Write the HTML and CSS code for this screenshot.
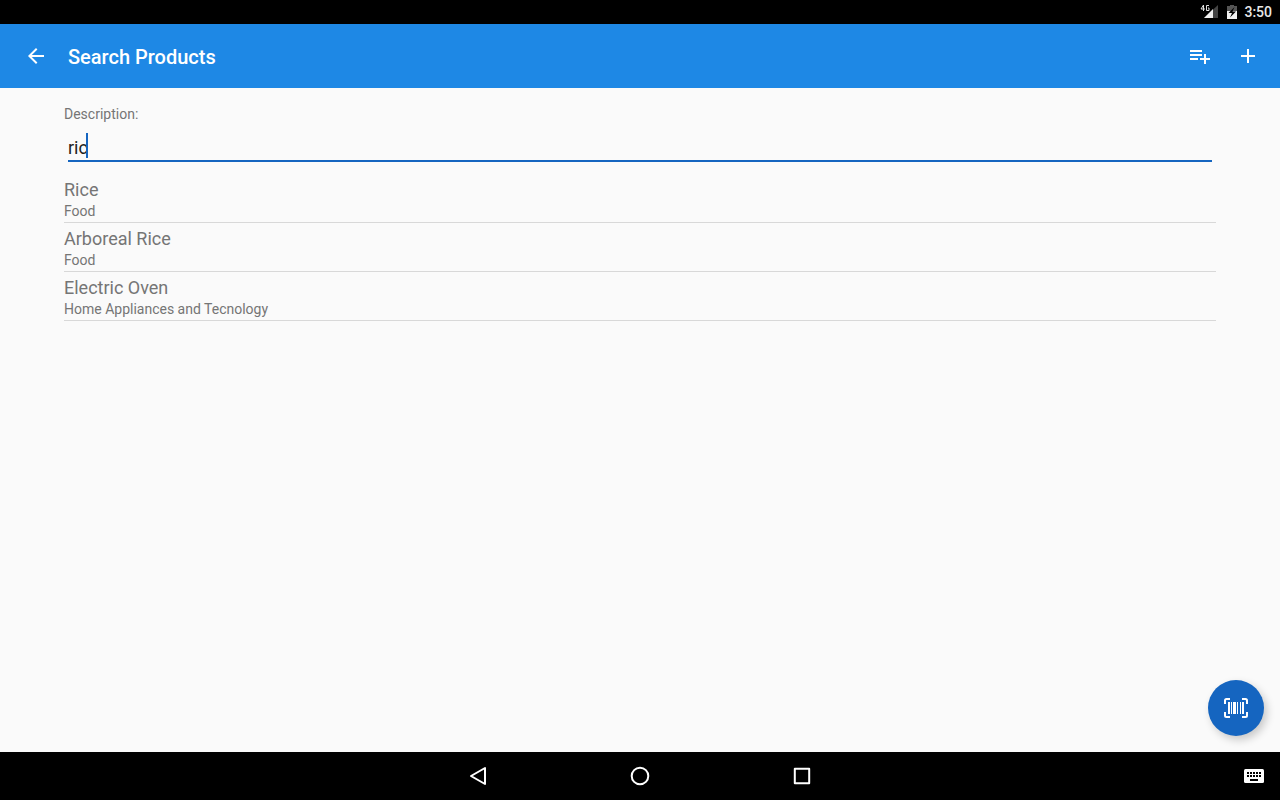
FILE: index.html
```html
<!DOCTYPE html>
<html lang="en">
<head>
<meta charset="utf-8">
<meta name="viewport" content="width=device-width, initial-scale=1">
<title>Search Products</title>
<link rel="stylesheet" href="styles.css">
</head>
<body>
<div class="status-bar">
  <svg class="signal" width="18" height="16" viewBox="0 0 18 16" aria-label="4G signal">
    <path d="M18 1v13H4z" fill="#444"/>
    <path d="M13 5v9H4z" fill="#f0f0f0"/>
    <path d="M3.500 7V1L1 5h4M9 1.500H6.500v5H9V4H8" fill="none" stroke="#e0e0e0"/>
  </svg>
  <svg class="battery" width="10" height="16" viewBox="0 0 10 16" aria-label="Battery charging">
    <path d="M3 1h4v1h3v6H0V2h3z" fill="#555"/>
    <path d="M0 7h10v8H0z" fill="#f0f0f0"/>
    <path d="M7.500 3L1.500 9H5l-2 4.500L9 7.500H5.500z" fill="#000"/>
  </svg>
  <time class="clock">3:50</time>
</div>
<header class="app-bar">
  <button class="icon-button" type="button" aria-label="Back">
    <svg width="24" height="24" viewBox="0 0 24 24" fill="currentColor"><path d="M20 11H7.830l5.590-5.590L12 4l-8 8 8 8 1.410-1.410L7.830 13H20z"/></svg>
  </button>
  <h1 class="title">Search Products</h1>
  <button class="icon-button" type="button" aria-label="Add to list">
    <svg width="24" height="24" viewBox="0 0 24 24" fill="currentColor"><path d="M14 10H2v2h12zM14 6H2v2h12zM18 14v-4h-2v4h-4v2h4v4h2v-4h4v-2zM2 16h8v-2H2z"/></svg>
  </button>
  <button class="icon-button" type="button" aria-label="Add product">
    <svg width="24" height="24" viewBox="0 0 24 24" fill="currentColor"><path d="M19 13h-6v6h-2v-6H5v-2h6V5h2v6h6z"/></svg>
  </button>
</header>
<main class="content">
  <label class="label" for="description">Description:</label>
  <div class="field">
    <input class="input" id="description" type="text" value="ric" autocomplete="off" spellcheck="false">
    <span class="caret"></span>
  </div>
  <ul class="products">
    <li class="product"><span class="name">Rice</span><span class="category">Food</span></li>
    <li class="product"><span class="name">Arboreal Rice</span><span class="category">Food</span></li>
    <li class="product"><span class="name">Electric Oven</span><span class="category">Home Appliances and Tecnology</span></li>
  </ul>
  <button class="fab" type="button" aria-label="Scan barcode">
    <svg width="24" height="20" viewBox="0 0 24 20" fill="#fff">
      <path d="M6 1H2.500Q1 1 1 2.500V6M18 1h3.500Q23 1 23 2.500V6M6 19H2.500Q1 19 1 17.500V14M18 19h3.500q1.500 0 1.500-1.500V14" fill="none" stroke="#fff" stroke-width="2"/>
      <path d="M4 4h2v12H4zM7 4h1v12H7zM9 4h3v12H9zM13 4h1v12h-1zM16 4h1v12h-1zM18 4h2v12h-2z"/>
    </svg>
  </button>
</main>
<nav class="nav-bar">
  <div class="nav-main">
    <button class="nav-button" type="button" aria-label="Back">
      <svg width="24" height="24" viewBox="0 0 24 24"><path d="M19 4v16L5 12z"/></svg>
    </button>
    <button class="nav-button" type="button" aria-label="Home">
      <svg width="24" height="24" viewBox="0 0 24 24"><circle cx="12" cy="12" r="8.300"/></svg>
    </button>
    <button class="nav-button" type="button" aria-label="Recent apps">
      <svg width="24" height="24" viewBox="0 0 24 24"><rect x="4.800" y="4.800" width="14.400" height="14.400"/></svg>
    </button>
  </div>
  <button class="keyboard" type="button" aria-label="Keyboard">
    <svg width="20" height="14" viewBox="0 0 20 14"><rect width="20" height="14" rx="1.500" fill="#fff"/><path d="M3 4h14M3 7h14" stroke="#000" stroke-width="2" stroke-dasharray="2 1"/><path d="M3 5.500h14" stroke="#fff"/><path d="M6 11h8" stroke="#000" stroke-width="2"/></svg>
  </button>
</nav>
</body>
</html>
```

FILE: styles.css
```css
* { box-sizing: border-box; }

body {
  margin: 0;
  min-height: 100vh;
  display: flex;
  flex-direction: column;
  background: #fafafa;
  color: #757575;
  font-family: Roboto, sans-serif;
  font-size: 14px;
  line-height: 16px;
}

button {
  display: flex;
  align-items: center;
  justify-content: center;
  padding: 0;
  border: 0;
  background: none;
  color: inherit;
}

svg { display: block; }

.status-bar {
  display: flex;
  align-items: center;
  height: 24px;
  padding: 0 8px;
  background: #000;
  color: #e8e8e8;
}

.signal { margin-left: auto; }
.battery { margin: 0 7px 0 9px; }
.clock { font-weight: 500; }

.app-bar {
  display: flex;
  align-items: center;
  height: 64px;
  padding: 0 8px 0 12px;
  background: #1e88e5;
  color: #fff;
}

.icon-button {
  width: 48px;
  height: 48px;
}

.title {
  flex: 1;
  margin: 0;
  padding: 2px 8px 0;
  font-size: 20px;
  font-weight: 500;
  line-height: 24px;
}

.content {
  position: relative;
  flex: 1;
  padding: 18px 64px;
}

.label { display: block; }

.field {
  position: relative;
  margin: 8px 4px 12px;
  border-bottom: 2px solid #1565c0;
}

.input {
  display: block;
  width: 100%;
  height: 30px;
  padding: 4px 0 0;
  border: 0;
  outline: 0;
  background: none;
  color: #212121;
  caret-color: #1565c0;
  font: 18px/26px Roboto, sans-serif;
}

.caret {
  position: absolute;
  top: 3px;
  left: 18px;
  width: 2px;
  height: 25px;
  background: #1565c0;
}

.products {
  margin: 0;
  padding: 0;
  list-style: none;
}

.product {
  display: flex;
  flex-direction: column;
  gap: 2px;
  padding: 4px 0 3px;
  border-bottom: 1px solid #d8d8d8;
}

.name {
  font-size: 18px;
  line-height: 23px;
}

.fab {
  position: absolute;
  right: 16px;
  bottom: 16px;
  width: 56px;
  height: 56px;
  border-radius: 50%;
  background: #1565c0;
  box-shadow: 3px 4px 8px rgba(0, 0, 0, 0.2);
}

.nav-bar {
  position: relative;
  display: flex;
  justify-content: center;
  height: 48px;
  background: #000;
}

.nav-main {
  display: flex;
  gap: 66px;
}

.nav-button { width: 96px; }

.nav-button svg {
  fill: none;
  stroke: #fff;
  stroke-width: 2;
  stroke-linejoin: round;
}

.keyboard {
  position: absolute;
  top: 0;
  right: 8px;
  width: 36px;
  height: 48px;
}
```
